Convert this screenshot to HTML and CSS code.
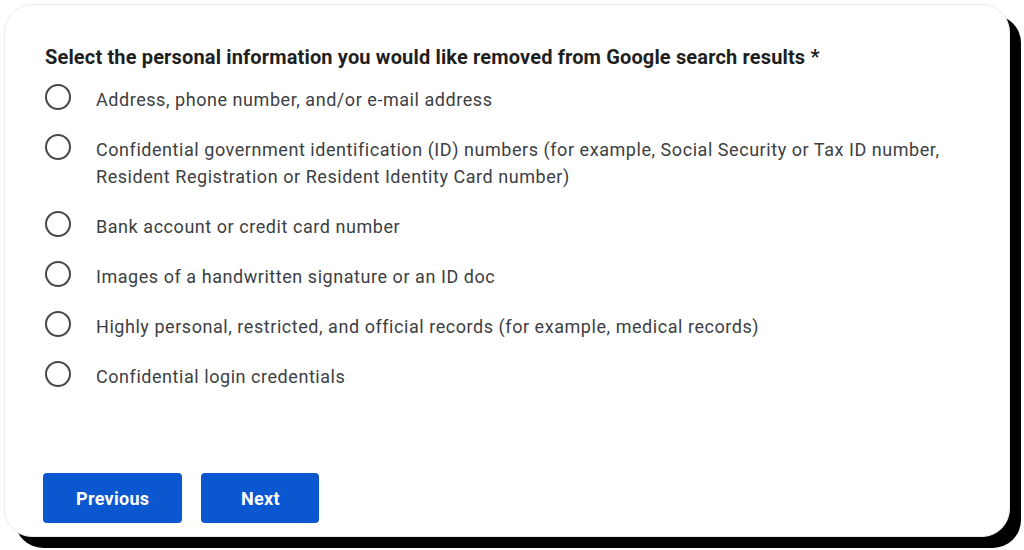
FILE: index.html
```html
<!DOCTYPE html>
<html lang="en">
<head>
<meta charset="utf-8">
<title>Removal request</title>
<link rel="stylesheet" href="styles.css">
</head>
<body>
<div class="card">
  <h2 class="question">Select the personal information you would like removed from Google search results *</h2>
  <ul class="options">
    <li class="option"><span class="radio"></span><span class="label">Address, phone number, and/or e-mail address</span></li>
    <li class="option"><span class="radio"></span><span class="label">Confidential government identification (ID) numbers (for example, Social Security or Tax ID number, Resident Registration or Resident Identity Card number)</span></li>
    <li class="option"><span class="radio"></span><span class="label">Bank account or credit card number</span></li>
    <li class="option"><span class="radio"></span><span class="label">Images of a handwritten signature or an ID doc</span></li>
    <li class="option"><span class="radio"></span><span class="label">Highly personal, restricted, and official records (for example, medical records)</span></li>
    <li class="option"><span class="radio"></span><span class="label">Confidential login credentials</span></li>
  </ul>
  <div class="actions">
    <button class="btn btn-prev">Previous</button>
    <button class="btn btn-next">Next</button>
  </div>
</div>
</body>
</html>
```

FILE: styles.css
```css
html, body {
  margin: 0;
  padding: 0;
  background: #ffffff;
}

body {
  font-family: Roboto, "Liberation Sans", Arial, sans-serif;
  padding: 4px;
  width: 1024px;
  height: 550px;
  box-sizing: border-box;
  overflow: hidden;
}

.card {
  box-sizing: border-box;
  width: 1006px;
  height: 533px;
  border: 1px solid #ececec;
  border-radius: 28px;
  background: #ffffff;
  box-shadow: 11px 11px 0 #000000;
  padding: 40px 40px 13px 40px;
  display: flex;
  flex-direction: column;
}

.question {
  margin: 0;
  font-size: 20px;
  line-height: 24px;
  font-weight: 700;
  letter-spacing: 0.15px;
  color: #1f1f1f;
}

.options {
  list-style: none;
  margin: 17px 0 0 0;
  padding: 0;
  display: flex;
  flex-direction: column;
  gap: 23px;
}

.option {
  display: flex;
  align-items: flex-start;
  gap: 25px;
}

.radio {
  flex: none;
  box-sizing: border-box;
  width: 26px;
  height: 26px;
  margin-top: -2px;
  border: 2.5px solid #474747;
  border-radius: 50%;
}

.label {
  font-size: 18px;
  line-height: 27px;
  letter-spacing: 0.55px;
  color: #3c4043;
}

.actions {
  margin-top: auto;
  display: flex;
  gap: 19px;
  margin-left: -2px;
}

.btn {
  font-family: Roboto, "Liberation Sans", Arial, sans-serif;
  height: 50px;
  min-width: 118px;
  padding: 0 33px;
  border: none;
  border-radius: 4px;
  background: #0b57d0;
  color: #ffffff;
  font-size: 18px;
  font-weight: 700;
  letter-spacing: 0.3px;
}
```
